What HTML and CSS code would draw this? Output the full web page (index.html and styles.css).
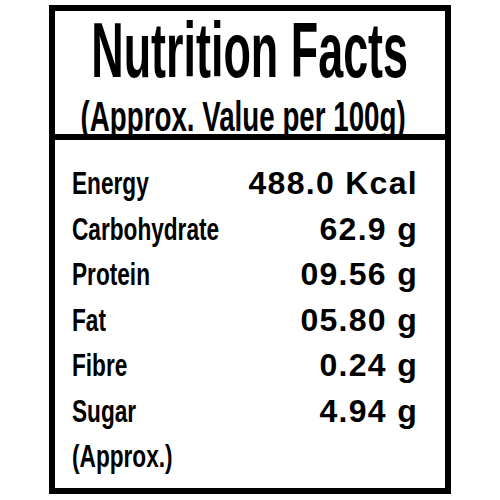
FILE: index.html
```html
<!DOCTYPE html>
<html lang="en">
  <head>
    <meta charset="UTF-8" />
    <meta name="viewport" content="width=device-width, initial-scale=1.0" />
    <title>Nutrition Facts</title>
    <link rel="stylesheet" href="styles.css">
  </head>
  <body>
    <div class="panel">
      <div class="head">
        <h1 class="title"><span>Nutrition Facts</span></h1>
        <p class="sub"><span>(Approx. Value per 100g)</span></p>
      </div>
      <div class="rows">
        <div class="row"><span class="name">Energy</span><span class="val">488.0 Kcal</span></div>
        <div class="row"><span class="name">Carbohydrate</span><span class="val">62.9 g</span></div>
        <div class="row"><span class="name">Protein</span><span class="val">09.56 g</span></div>
        <div class="row"><span class="name">Fat</span><span class="val">05.80 g</span></div>
        <div class="row"><span class="name">Fibre</span><span class="val">0.24 g</span></div>
        <div class="row"><span class="name">Sugar</span><span class="val">4.94 g</span></div>
        <div class="row"><span class="name">(Approx.)</span></div>
      </div>
    </div>
  </body>
</html>
```

FILE: styles.css
```css
body {
  margin: 0;
  padding: 0;
  background: #fff;
  color: #000;
  font-family: "Liberation Sans", Arial, sans-serif;
}
.panel {
  box-sizing: border-box;
  width: 402px;
  height: 489px;
  margin: 5px 0 0 49px;
  border: 6px solid #000;
  overflow: hidden;
}
.head {
  height: 129px;
  padding-top: 1px;
  box-sizing: border-box;
  border-bottom: 6px solid #000;
  white-space: nowrap;
}
.title {
  display: flex;
  justify-content: center;
  margin: 0;
  font-size: 77px;
  line-height: 77px;
  font-weight: bold;
}
/* no condensed face installed, so squeeze the regular one */
.title span {
  transform: scaleX(0.583);
}
.sub {
  display: flex;
  justify-content: center;
  margin: 6px 14px 0 0;
  font-size: 43px;
  line-height: 43px;
  font-weight: bold;
}
.sub span {
  transform: scaleX(0.645);
}
.rows {
  padding: 21px 27px 0 17px;
}
.row {
  display: flex;
  justify-content: space-between;
  align-items: baseline;
  height: 45.5px;
  line-height: 45.5px;
  white-space: nowrap;
}
.name {
  display: inline-block;
  font-size: 31px;
  font-weight: bold;
  transform: scaleX(0.73);
  transform-origin: left center;
}
.val {
  font-size: 32px;
  font-weight: bold;
  letter-spacing: 1.3px;
}
```
